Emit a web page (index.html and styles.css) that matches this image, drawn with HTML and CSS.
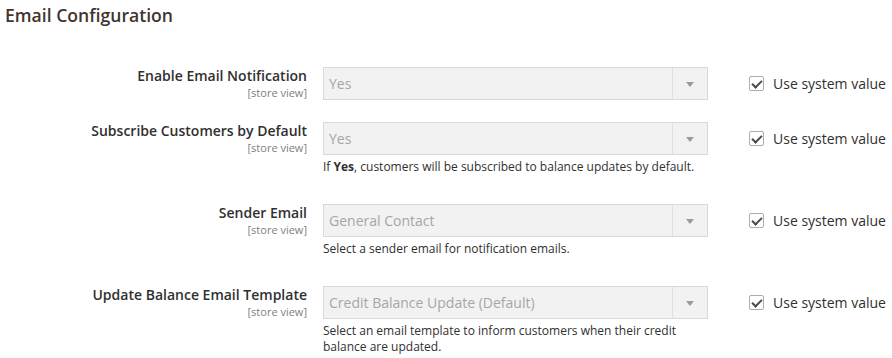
FILE: index.html
```html
<!DOCTYPE html>
<html lang="en">
<head>
  <meta charset="UTF-8" />
  <title>Email Configuration</title>
  <link rel="stylesheet" href="styles.css">
</head>
<body>
  <div class="section">
    <h3 class="section-title">Email Configuration</h3>

    <div class="fields">
      <div class="field">
        <div class="label">
          <span>Enable Email Notification</span>
          <span class="scope">[store view]</span>
        </div>
        <div class="control">
          <div class="select disabled"><span>Yes</span><i class="arrow"></i></div>
        </div>
        <label class="use-default">
          <span class="checkbox checked"></span>
          <span>Use system value</span>
        </label>
      </div>

      <div class="field">
        <div class="label">
          <span>Subscribe Customers by Default</span>
          <span class="scope">[store view]</span>
        </div>
        <div class="control">
          <div class="select disabled"><span>Yes</span><i class="arrow"></i></div>
          <p class="note">If <strong>Yes</strong>, customers will be subscribed to balance updates by default.</p>
        </div>
        <label class="use-default">
          <span class="checkbox checked"></span>
          <span>Use system value</span>
        </label>
      </div>

      <div class="field">
        <div class="label">
          <span>Sender Email</span>
          <span class="scope">[store view]</span>
        </div>
        <div class="control">
          <div class="select disabled"><span>General Contact</span><i class="arrow"></i></div>
          <p class="note">Select a sender email for notification emails.</p>
        </div>
        <label class="use-default">
          <span class="checkbox checked"></span>
          <span>Use system value</span>
        </label>
      </div>

      <div class="field">
        <div class="label">
          <span>Update Balance Email Template</span>
          <span class="scope">[store view]</span>
        </div>
        <div class="control">
          <div class="select disabled"><span>Credit Balance Update (Default)</span><i class="arrow"></i></div>
          <p class="note">Select an email template to inform customers when their credit balance are updated.</p>
        </div>
        <label class="use-default">
          <span class="checkbox checked"></span>
          <span>Use system value</span>
        </label>
      </div>
    </div>
  </div>
</body>
</html>
```

FILE: styles.css
```css
* { box-sizing: border-box; margin: 0; padding: 0; }
body { background: #ffffff; font-family: 'Open Sans', sans-serif; color: #303030; overflow: hidden; }

.section { padding: 3px 0 0 5px; }
.section-title { font-size: 17.6px; font-weight: 600; color: #41362f; line-height: 24px; }

.fields { margin-top: 40px; }

.field {
  display: grid; grid-template-columns: 302px 385px 1fr; column-gap: 16px;
  margin-bottom: 22px;
}
.field:last-child { margin-bottom: 0; }

.label { display: flex; flex-direction: column; align-items: flex-end; text-align: right; font-size: 14px; font-weight: 600; line-height: 18px; color: #303030; }
.scope { font-size: 11px; font-weight: 400; color: #808080; line-height: 14px; margin-top: 1px; }

.select {
  position: relative; height: 33px; display: flex; align-items: center;
  padding: 0 40px 0 5px; background: #f2f2f2; border: 1px solid #d9d9d9;
  font-size: 14px; color: #a6a6a6;
}
.select .arrow {
  position: absolute; top: 0; right: 0; width: 35px; height: 100%;
  border-left: 1px solid #e0e0e0;
}
.select .arrow::after {
  content: ""; position: absolute; left: 13px; top: 14px;
  border-left: 4px solid transparent; border-right: 4px solid transparent; border-top: 5px solid #9a9a9a;
}

.note { font-size: 12px; line-height: 16px; color: #303030; margin: 3.5px 0 7.5px; max-width: 380px; }
.note strong { font-weight: 700; }

.use-default { display: flex; align-items: center; gap: 9px; height: 33px; padding-left: 25px; font-size: 14px; color: #303030; white-space: nowrap; }
.checkbox {
  position: relative; width: 15px; height: 15px; border: 1px solid #adadad; border-radius: 2px; background: #fff;
}
.checkbox.checked::after {
  content: ""; position: absolute; left: 4px; top: 1px; width: 4px; height: 8px;
  border-right: 2px solid #514943; border-bottom: 2px solid #514943; transform: rotate(45deg);
}
```
